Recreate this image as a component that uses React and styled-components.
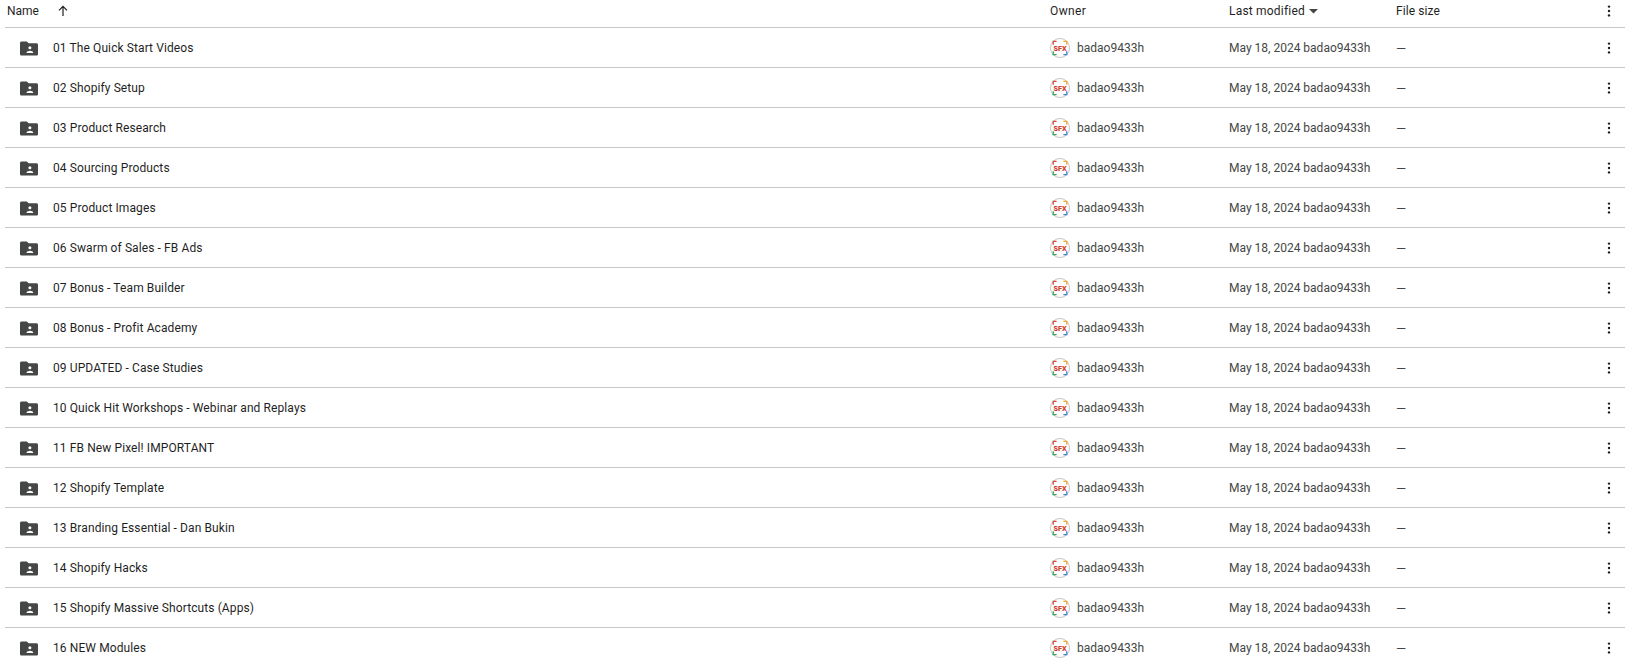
import React from 'react';
import styled, { createGlobalStyle } from 'styled-components';

const folders = [
  '01 The Quick Start Videos',
  '02 Shopify Setup',
  '03 Product Research',
  '04 Sourcing Products',
  '05 Product Images',
  '06 Swarm of Sales - FB Ads',
  '07 Bonus - Team Builder',
  '08 Bonus - Profit Academy',
  '09 UPDATED - Case Studies',
  '10 Quick Hit Workshops - Webinar and Replays',
  '11 FB New Pixel! IMPORTANT',
  '12 Shopify Template',
  '13 Branding Essential - Dan Bukin',
  '14 Shopify Hacks',
  '15 Shopify Massive Shortcuts (Apps)',
  '16 NEW Modules',
];

const Global = createGlobalStyle`
  html, body { margin: 0; padding: 0; background: #fff; overflow: hidden; }
  body { font-family: Roboto, "Liberation Sans", sans-serif; }
`;

const Table = styled.div`
  height: 661px;
  overflow: hidden;
  padding-left: 5px;
`;

const Row = styled.div`
  display: grid;
  grid-template-columns: 1045px 179px 167px 1fr 32px;
  align-items: center;
  box-sizing: border-box;
  height: ${(p) => (p.$head ? '28px' : '40px')};
  padding-bottom: ${(p) => (p.$head ? '5px' : '0')};
  padding-top: ${(p) => (p.$head ? '0' : '1px')};
  border-bottom: 1px solid #c7c7c7;
  font-size: 12px;
  color: ${(p) => (p.$head ? '#1f1f1f' : '#444746')};
`;

const HeadName = styled.div`
  display: flex;
  align-items: center;
  padding-left: 2px;
  gap: 18px;
  color: #1f1f1f;
`;

const HeadCell = styled.div`
  display: flex;
  align-items: center;
  gap: 4px;
  letter-spacing: ${(p) => p.$spacing || '0.1px'};
`;

const NameCell = styled.div`
  display: flex;
  align-items: center;
  padding-left: 15px;
  gap: 15px;
  letter-spacing: 0.1px;
  color: #1f1f1f;
`;

const OwnerCell = styled.div`
  display: flex;
  align-items: center;
  gap: 7px;
`;

const Dash = styled.div`
  font-size: 13px;
`;

const MoreCell = styled.div`
  display: flex;
  justify-content: center;
  padding-right: 1px;
  color: #1f1f1f;
`;

const FolderIcon = () => (
  <svg width="18" height="15" viewBox="0 0 18 15">
    <path
      fill="#444746"
      d="M1.6 0.5h5.2l1.8 1.8h7.8c.9 0 1.6.7 1.6 1.6v9c0 .9-.7 1.6-1.6 1.6H1.6C.7 14.5 0 13.8 0 12.9V2.1C0 1.2.7.5 1.6.5z"
    />
    <circle cx="9.9" cy="6.8" r="1.5" fill="#fff" />
    <path fill="#fff" d="M6.6 11.6c0-1.2 2.2-1.9 3.3-1.9s3.3.7 3.3 1.9v.5H6.6z" />
  </svg>
);

const Avatar = () => (
  <svg width="20" height="20" viewBox="0 0 20 20">
    <circle cx="10" cy="10" r="9.5" fill="#fff" stroke="#b5b5b5" strokeWidth="0.8" />
    <path d="M3.2 6.8V3.4h3.4" fill="none" stroke="#dc4b3e" strokeWidth="1.3" />
    <path d="M13.4 3.4h3.4v3.4" fill="none" stroke="#f0a92e" strokeWidth="1.3" />
    <path d="M3.2 13.2v3.4h3.4" fill="none" stroke="#3f9e55" strokeWidth="1.3" />
    <path d="M13.4 16.6h3.4v-3.4" fill="none" stroke="#4a7fd8" strokeWidth="1.3" />
    <text
      x="10"
      y="12.6"
      textAnchor="middle"
      fontFamily="Roboto, sans-serif"
      fontSize="7.2"
      fontWeight="900"
      fill="#d2402f"
    >
      SFX
    </text>
  </svg>
);

const UpArrow = () => (
  <svg width="12" height="12" viewBox="0 0 12 12">
    <path d="M6 11V1.6M2 5.4l4-4 4 4" fill="none" stroke="#1f1f1f" strokeWidth="1.2" />
  </svg>
);

const SortCaret = () => (
  <svg width="9" height="5" viewBox="0 0 9 5">
    <path d="M0 0h9L4.5 4.5z" fill="#444746" />
  </svg>
);

const Dots = () => (
  <svg width="4" height="12" viewBox="0 0 4 12">
    <circle cx="2" cy="1.6" r="1.2" fill="#1f1f1f" />
    <circle cx="2" cy="6" r="1.2" fill="#1f1f1f" />
    <circle cx="2" cy="10.4" r="1.2" fill="#1f1f1f" />
  </svg>
);

const App = () => {
  return (
    <Table>
      <Global />
      <Row $head>
        <HeadName>
          Name
          <UpArrow />
        </HeadName>
        <HeadCell $spacing="0.4px">Owner</HeadCell>
        <HeadCell $spacing="0.2px">
          Last modified
          <SortCaret />
        </HeadCell>
        <HeadCell>File size</HeadCell>
        <MoreCell>
          <Dots />
        </MoreCell>
      </Row>
      {folders.map((name) => (
        <Row key={name}>
          <NameCell>
            <FolderIcon />
            {name}
          </NameCell>
          <OwnerCell>
            <Avatar />
            badao9433h
          </OwnerCell>
          <div>May 18, 2024 badao9433h</div>
          <Dash>—</Dash>
          <MoreCell>
            <Dots />
          </MoreCell>
        </Row>
      ))}
    </Table>
  );
};

export default App;
